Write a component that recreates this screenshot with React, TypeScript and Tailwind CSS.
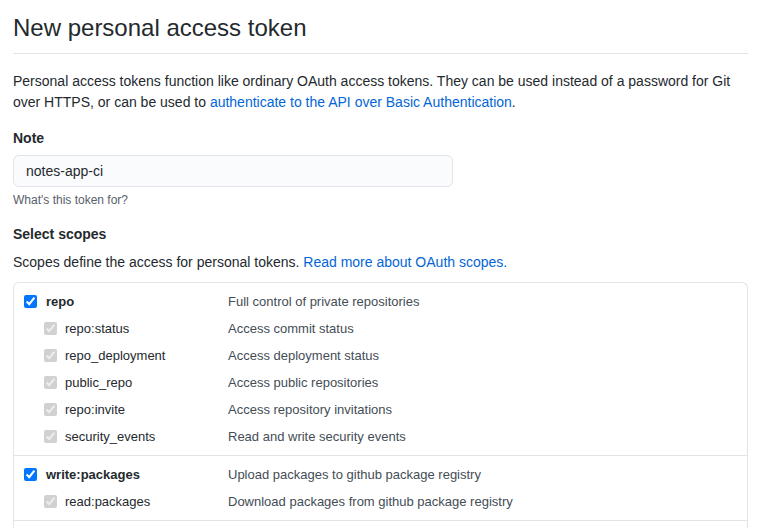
import React from "react";

interface Scope {
  name: string;
  description: string;
  children: { name: string; description: string }[];
}

const scopes: Scope[] = [
  {
    name: "repo",
    description: "Full control of private repositories",
    children: [
      { name: "repo:status", description: "Access commit status" },
      { name: "repo_deployment", description: "Access deployment status" },
      { name: "public_repo", description: "Access public repositories" },
      { name: "repo:invite", description: "Access repository invitations" },
      { name: "security_events", description: "Read and write security events" },
    ],
  },
  {
    name: "write:packages",
    description: "Upload packages to github package registry",
    children: [
      { name: "read:packages", description: "Download packages from github package registry" },
    ],
  },
];

const ScopeGroup: React.FC<{ scope: Scope }> = ({ scope }) => (
  <div className="border-b border-[#e1e4e8] py-[5px]">
    <div className="flex h-[27px] items-center pl-[10px]">
      <div className="flex w-[204px] items-center">
        <input type="checkbox" defaultChecked className="m-0 h-[13px] w-[13px]" />
        <span className="ml-[9px] font-bold text-[#24292e]">{scope.name}</span>
      </div>
      <span className="text-[#444d56]">{scope.description}</span>
    </div>
    {scope.children.map((child) => (
      <div key={child.name} className="flex h-[27px] items-center pl-[30px]">
        <div className="flex w-[184px] items-center">
          <input type="checkbox" defaultChecked disabled className="m-0 h-[13px] w-[13px]" />
          <span className="ml-[8px] text-[#24292e]">{child.name}</span>
        </div>
        <span className="text-[#444d56]">{child.description}</span>
      </div>
    ))}
  </div>
);

const App: React.FC = () => {
  return (
    <div className="h-[528px] overflow-hidden bg-white pl-[13px] pr-[10px] font-['Liberation_Sans',Arial,sans-serif] text-[14px] leading-[21px] text-[#24292e]">
      <div className="mt-[13px] border-b border-[#e1e4e8] pb-[10px]">
        <h1 className="text-[24px] font-normal leading-[30px]">New personal access token</h1>
      </div>
      <p className="mt-[17px]">
        Personal access tokens function like ordinary OAuth access tokens. They can be used instead of a password for Git
        over HTTPS, or can be used to{" "}
        <a href="#" className="text-[#0366d6]">
          authenticate to the API over Basic Authentication
        </a>
        .
      </p>
      <div className="mt-[15px] font-bold">Note</div>
      <input
        type="text"
        defaultValue="notes-app-ci"
        className="mt-[6px] block h-[32px] w-[440px] rounded-[6px] border border-[#e1e4e8] bg-[#fafbfc] px-[12px] text-[14px] text-[#24292e] outline-none"
      />
      <div className="mt-[4px] text-[12px] leading-[18px] text-[#586069]">What's this token for?</div>
      <div className="mt-[15px] font-bold">Select scopes</div>
      <div className="mt-[7px]">
        Scopes define the access for personal tokens.{" "}
        <a href="#" className="text-[#0366d6]">
          Read more about OAuth scopes.
        </a>
      </div>
      <div className="mt-[9px] h-[300px] rounded-t-[6px] border border-b-0 border-[#e1e4e8] text-[13px] leading-[18px]">
        {scopes.map((scope) => (
          <ScopeGroup key={scope.name} scope={scope} />
        ))}
      </div>
    </div>
  );
};

export default App;
